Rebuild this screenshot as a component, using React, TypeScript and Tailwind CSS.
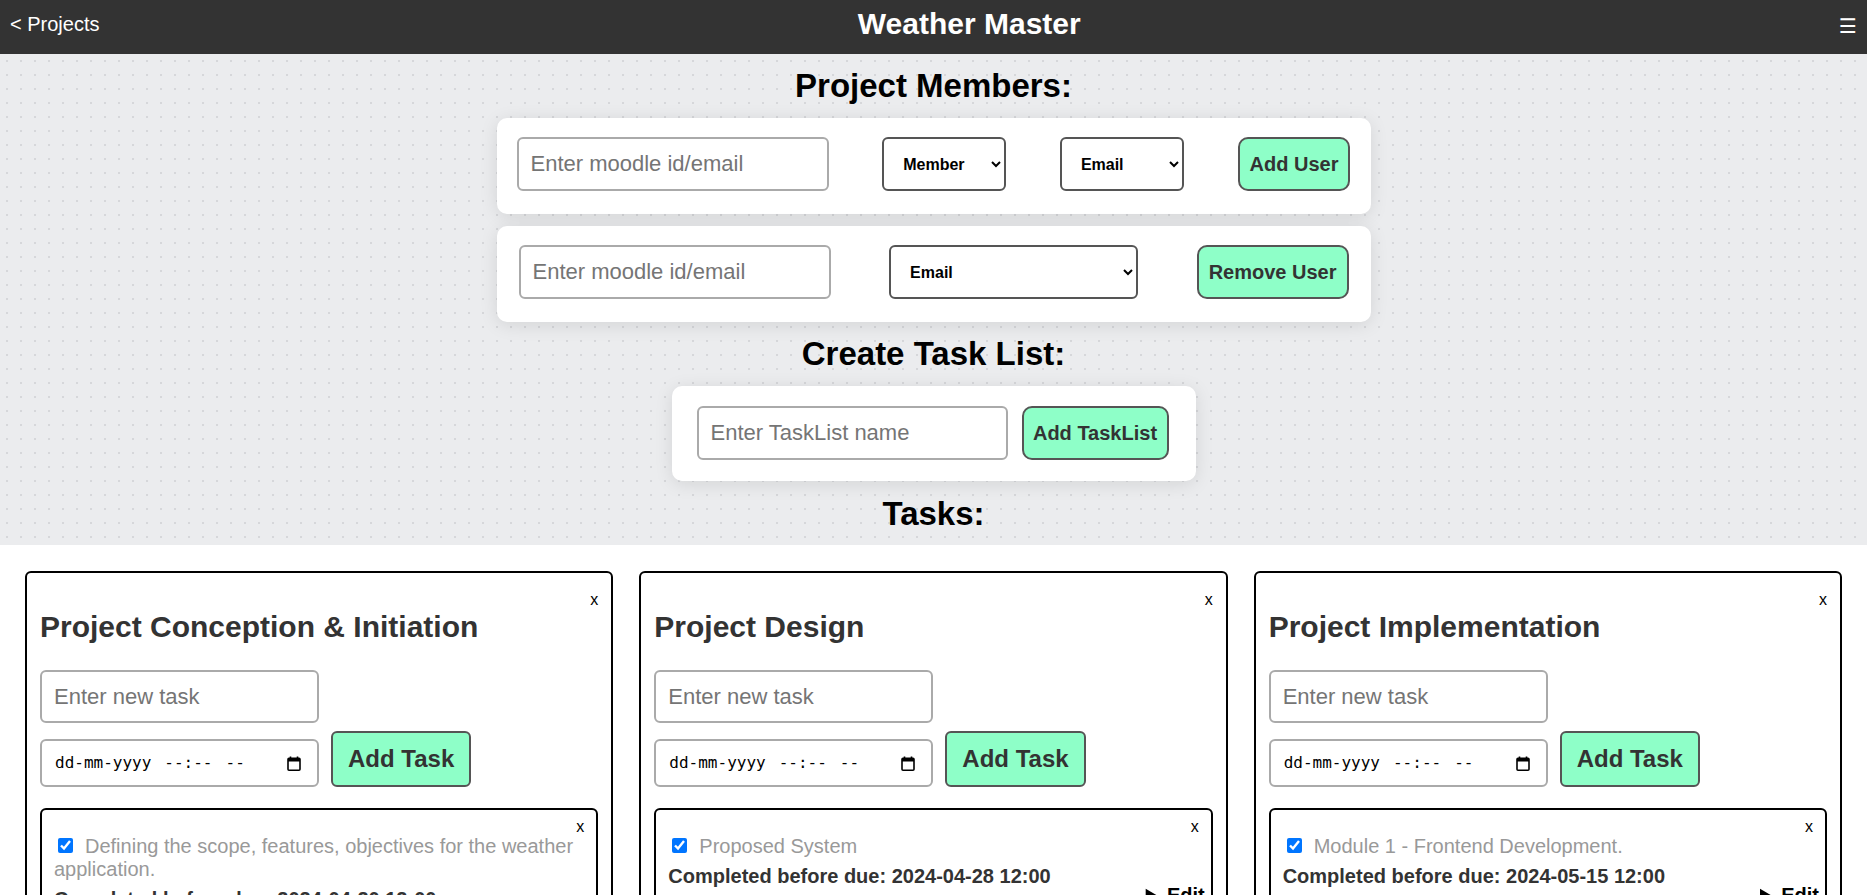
import { useState } from 'react';

type Task = { id: number; text: string; due: string; done: boolean };
type TaskList = { id: number; name: string; tasks: Task[] };

const initialLists: TaskList[] = [
  {
    id: 1,
    name: 'Project Conception & Initiation',
    tasks: [
      { id: 1, text: 'Defining the scope, features, objectives for the weather application.', due: '2024-04-20 12:00', done: true },
    ],
  },
  {
    id: 2,
    name: 'Project Design',
    tasks: [{ id: 2, text: 'Proposed System', due: '2024-04-28 12:00', done: true }],
  },
  {
    id: 3,
    name: 'Project Implementation',
    tasks: [{ id: 3, text: 'Module 1 - Frontend Development.', due: '2024-05-15 12:00', done: true }],
  },
];

const CalendarIcon = () => (
  <svg width="14" height="15" viewBox="0 0 14 15" fill="none">
    <path d="M3.5 0.5v2.5M10.5 0.5v2.5" stroke="black" strokeWidth="1.6" />
    <rect x="1" y="2.3" width="12" height="11.9" rx="1" stroke="black" strokeWidth="1.6" />
    <rect x="1" y="2.3" width="12" height="3.2" fill="black" />
  </svg>
);

const TaskCard = ({ task }: { task: Task }) => {
  const [done, setDone] = useState(task.done);

  return (
    <li className="rounded-[6px] border-2 border-black px-3 pt-[9px] pb-2">
      <div className="text-right text-[16px] leading-4">
        <button className="cursor-pointer">x</button>
      </div>
      <div className="text-[20px] leading-[23px] text-[#999]">
        <input
          type="checkbox"
          checked={done}
          onChange={() => setDone(!done)}
          className="mr-[3px] mb-[1px] ml-[4px] size-[15px] accent-[#0075ff]"
        />
        <span className="ml-[9px]">{task.text}</span>
      </div>
      <p className="mt-[7px] text-[20px] leading-[23px] font-bold text-[#333]">Completed before due: {task.due}</p>
      <details className="-mt-[4px] -mr-[6px] text-right">
        <summary className="cursor-pointer text-[20px] leading-[23px] font-bold text-black">Edit</summary>
      </details>
    </li>
  );
};

const TaskListCard = ({ list }: { list: TaskList }) => (
  <div className="rounded-[6px] border-2 border-black px-[13px] pt-[19px] pb-4">
    <div className="text-right text-[16px] leading-4">
      <button className="cursor-pointer">x</button>
    </div>
    <h2 className="mt-[2px] text-[30px] leading-[34px] font-bold text-[#333]">{list.name}</h2>
    <input
      placeholder="Enter new task"
      className="mt-[26px] block h-[53px] w-[279px] rounded-[6px] border-2 border-[#aaa] px-3 text-[22px] outline-none placeholder:text-[#757575]"
    />
    <div className="mt-[8px] flex items-end gap-3">
      <div className="flex h-[48px] w-[279px] items-center justify-between rounded-[6px] border-2 border-[#aaa] pr-[16px] pl-[13px] font-['DejaVu_Sans_Mono',monospace] text-[16px] text-black">
        <div className="flex gap-[13px]">
          <span>dd-mm-yyyy</span>
          <span>--:--</span>
          <span>--</span>
        </div>
        <CalendarIcon />
      </div>
      <button className="h-[56px] cursor-pointer rounded-[6px] border-2 border-[#555] bg-[#8effc8] px-[15px] text-[24px] leading-[28px] font-bold text-[#333]">
        Add Task
      </button>
    </div>
    <ul className="mt-[21px] flex flex-col gap-3">
      {list.tasks.map((t) => (
        <TaskCard key={t.id} task={t} />
      ))}
    </ul>
  </div>
);

const App = () => {
  const [lists] = useState(initialLists);

  return (
    <div className="flex h-screen flex-col overflow-hidden bg-white font-['Liberation_Sans',Arial,sans-serif]">
      <header className="flex h-[54px] shrink-0 items-start justify-between bg-[#333] px-[10px] text-white">
        <a href="#" className="mt-[13px] text-[20px] leading-[23px]">
          &lt; Projects
        </a>
        <h1 className="mt-[7px] text-[30px] leading-[34px] font-bold">Weather Master</h1>
        <button className="mt-[15px] font-['DejaVu_Sans',sans-serif] text-[20px] leading-[23px]">☰</button>
      </header>

      {/* Members + task list forms */}
      <section className="flex shrink-0 flex-col items-center bg-[#ebecee] bg-[radial-gradient(circle,#d6d7da_1px,transparent_1.6px)] pt-[13px] pb-[12px] [background-size:14px_14px]">
        <h2 className="text-[33px] leading-[38px] font-bold text-black">Project Members:</h2>

        <div className="mt-[13px] flex h-[96px] w-[874px] items-start justify-between rounded-[10px] bg-white px-5 pt-[19px] shadow-[0_3px_18px_rgba(0,0,0,0.1)]">
          <input
            placeholder="Enter moodle id/email"
            className="h-[54px] w-[312px] rounded-[6px] border-2 border-[#aaa] px-3 text-[22px] outline-none placeholder:text-[#757575]"
          />
          <select className="h-[54px] w-[124px] rounded-[6px] border-2 border-[#555] bg-white pl-[15px] text-[16px] font-bold text-black">
            <option>Member</option>
            <option>Admin</option>
          </select>
          <select className="h-[54px] w-[124px] rounded-[6px] border-2 border-[#555] bg-white pl-[15px] text-[16px] font-bold text-black">
            <option>Email</option>
            <option>Moodle ID</option>
          </select>
          <button className="h-[54px] cursor-pointer rounded-[10px] border-2 border-[#555] bg-[#8effc8] px-[10px] text-[20px] font-bold text-[#333]">
            Add User
          </button>
        </div>

        <div className="mt-3 flex h-[96px] w-[874px] items-start justify-between rounded-[10px] bg-white px-[22px] pt-[19px] shadow-[0_3px_18px_rgba(0,0,0,0.1)]">
          <input
            placeholder="Enter moodle id/email"
            className="h-[54px] w-[312px] rounded-[6px] border-2 border-[#aaa] px-3 text-[22px] outline-none placeholder:text-[#757575]"
          />
          <select className="h-[54px] w-[249px] rounded-[6px] border-2 border-[#555] bg-white pl-[15px] text-[16px] font-bold text-black">
            <option>Email</option>
            <option>Moodle ID</option>
          </select>
          <button className="h-[54px] cursor-pointer rounded-[10px] border-2 border-[#555] bg-[#8effc8] px-[10px] text-[20px] font-bold text-[#333]">
            Remove User
          </button>
        </div>

        <h2 className="mt-[13px] text-[33px] leading-[38px] font-bold text-black">Create Task List:</h2>

        <div className="mt-[13px] flex h-[95px] items-start gap-[14px] rounded-[10px] bg-white pt-[20px] pr-[27px] pl-[25px] shadow-[0_3px_18px_rgba(0,0,0,0.1)]">
          <input
            placeholder="Enter TaskList name"
            className="h-[54px] w-[311px] rounded-[6px] border-2 border-[#aaa] px-3 text-[22px] outline-none placeholder:text-[#757575]"
          />
          <button className="h-[54px] w-[147px] cursor-pointer rounded-[10px] border-2 border-[#555] bg-[#8effc8] text-[20px] font-bold text-[#333]">
            Add TaskList
          </button>
        </div>

        <h2 className="mt-[14px] text-[33px] leading-[38px] font-bold text-black">Tasks:</h2>
      </section>

      {/* Task lists */}
      <main className="grid grid-cols-3 items-start gap-[26px] px-[25px] pt-[26px]">
        {lists.map((l) => (
          <TaskListCard key={l.id} list={l} />
        ))}
      </main>
    </div>
  );
};

export default App;
